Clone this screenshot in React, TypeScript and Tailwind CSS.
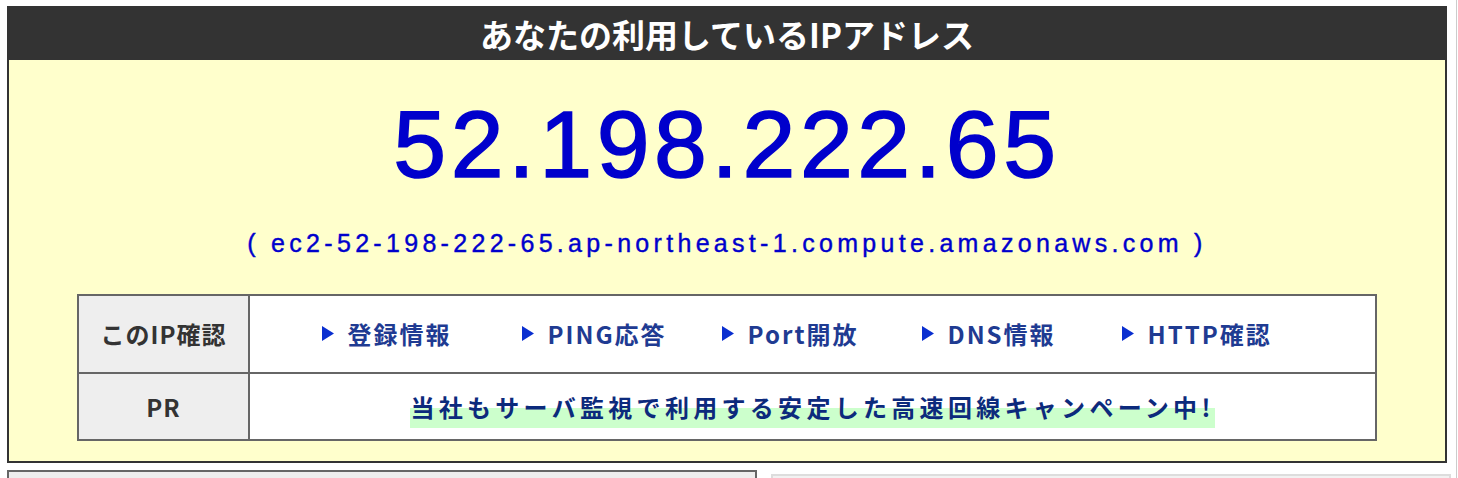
import React from "react";

const links = ["登録情報", "PING応答", "Port開放", "DNS情報", "HTTP確認"];

function Arrow() {
  return (
    <svg width="12" height="15" viewBox="0 0 12 15" className="shrink-0 -translate-y-[1px]">
      <polygon points="0,0 12,7.5 0,15" fill="#0a2fd0" />
    </svg>
  );
}

export default function App() {
  return (
    <div className="h-[478px] w-[1458px] overflow-hidden bg-white">
      <div className="h-[478px] w-[1457px] border-r border-[#cccccc] pt-[6px] pl-[7px]">
        {/* main box */}
        <div className="w-[1440px] border-2 border-[#333333]">
          <div className="flex h-[52px] items-center justify-center bg-[#333333]">
            <h1 className="font-['Noto_Sans_CJK_JP',sans-serif] text-[33px] font-bold leading-none text-white">
              あなたの利用しているIPアドレス
            </h1>
          </div>

          <div className="flex flex-col items-center bg-[#ffffcc] pb-[20px]">
            <div className="mt-[24px] font-['Liberation_Sans',sans-serif] text-[95px] leading-[120px] tracking-[4.6px] text-[#0000cc] [-webkit-text-stroke:1.6px_#0000cc]">
              52.198.222.65
            </div>
            <div className="mt-[24px] font-['Liberation_Sans',sans-serif] text-[25px] leading-[30px] tracking-[4.3px] text-[#0000cc] [-webkit-text-stroke:0.4px_#0000cc]">
              ( ec2-52-198-222-65.ap-northeast-1.compute.amazonaws.com )
            </div>

            <table className="mt-[36px] w-[1300px] border-collapse border-2 border-[#666666] font-['Noto_Sans_CJK_JP',sans-serif] text-[24px] font-bold">
              <tbody>
                <tr>
                  <td className="h-[78px] w-[171px] border-2 border-[#666666] bg-[#eeeeee] text-center tracking-[1px] text-[#333333]">
                    このIP確認
                  </td>
                  <td className="border-2 border-[#666666] bg-white">
                    <div className="flex justify-center pl-[18px]">
                      {links.map((l) => (
                        <a
                          key={l}
                          href="#"
                          className="flex w-[200px] items-center gap-[14px] tracking-[2px] text-[#1f3b92]"
                        >
                          <Arrow />
                          <span>{l}</span>
                        </a>
                      ))}
                    </div>
                  </td>
                </tr>
                <tr>
                  <td className="h-[67px] border-2 border-[#666666] bg-[#eeeeee] text-center tracking-[1px] text-[#333333]">
                    PR
                  </td>
                  <td className="border-2 border-[#666666] bg-white text-center">
                    <a
                      href="#"
                      className="bg-[linear-gradient(transparent_48%,#ccffcc_48%)] pb-[4px] tracking-[4.3px] text-[#0c2a7c]"
                    >
                      当社もサーバ監視で利用する安定した高速回線キャンペーン中!
                    </a>
                  </td>
                </tr>
              </tbody>
            </table>
          </div>
        </div>

        {/* lower panels (cut off) */}
        <div className="flex items-start gap-[14px]">
          <div className="mt-[7px] h-[60px] w-[750px] border-2 border-[#666666] bg-[#eeeeee]" />
          <div className="mt-[11px] h-[60px] w-[680px] border-2 border-[#dddddd] bg-[#f2f2f2]" />
        </div>
      </div>
    </div>
  );
}
